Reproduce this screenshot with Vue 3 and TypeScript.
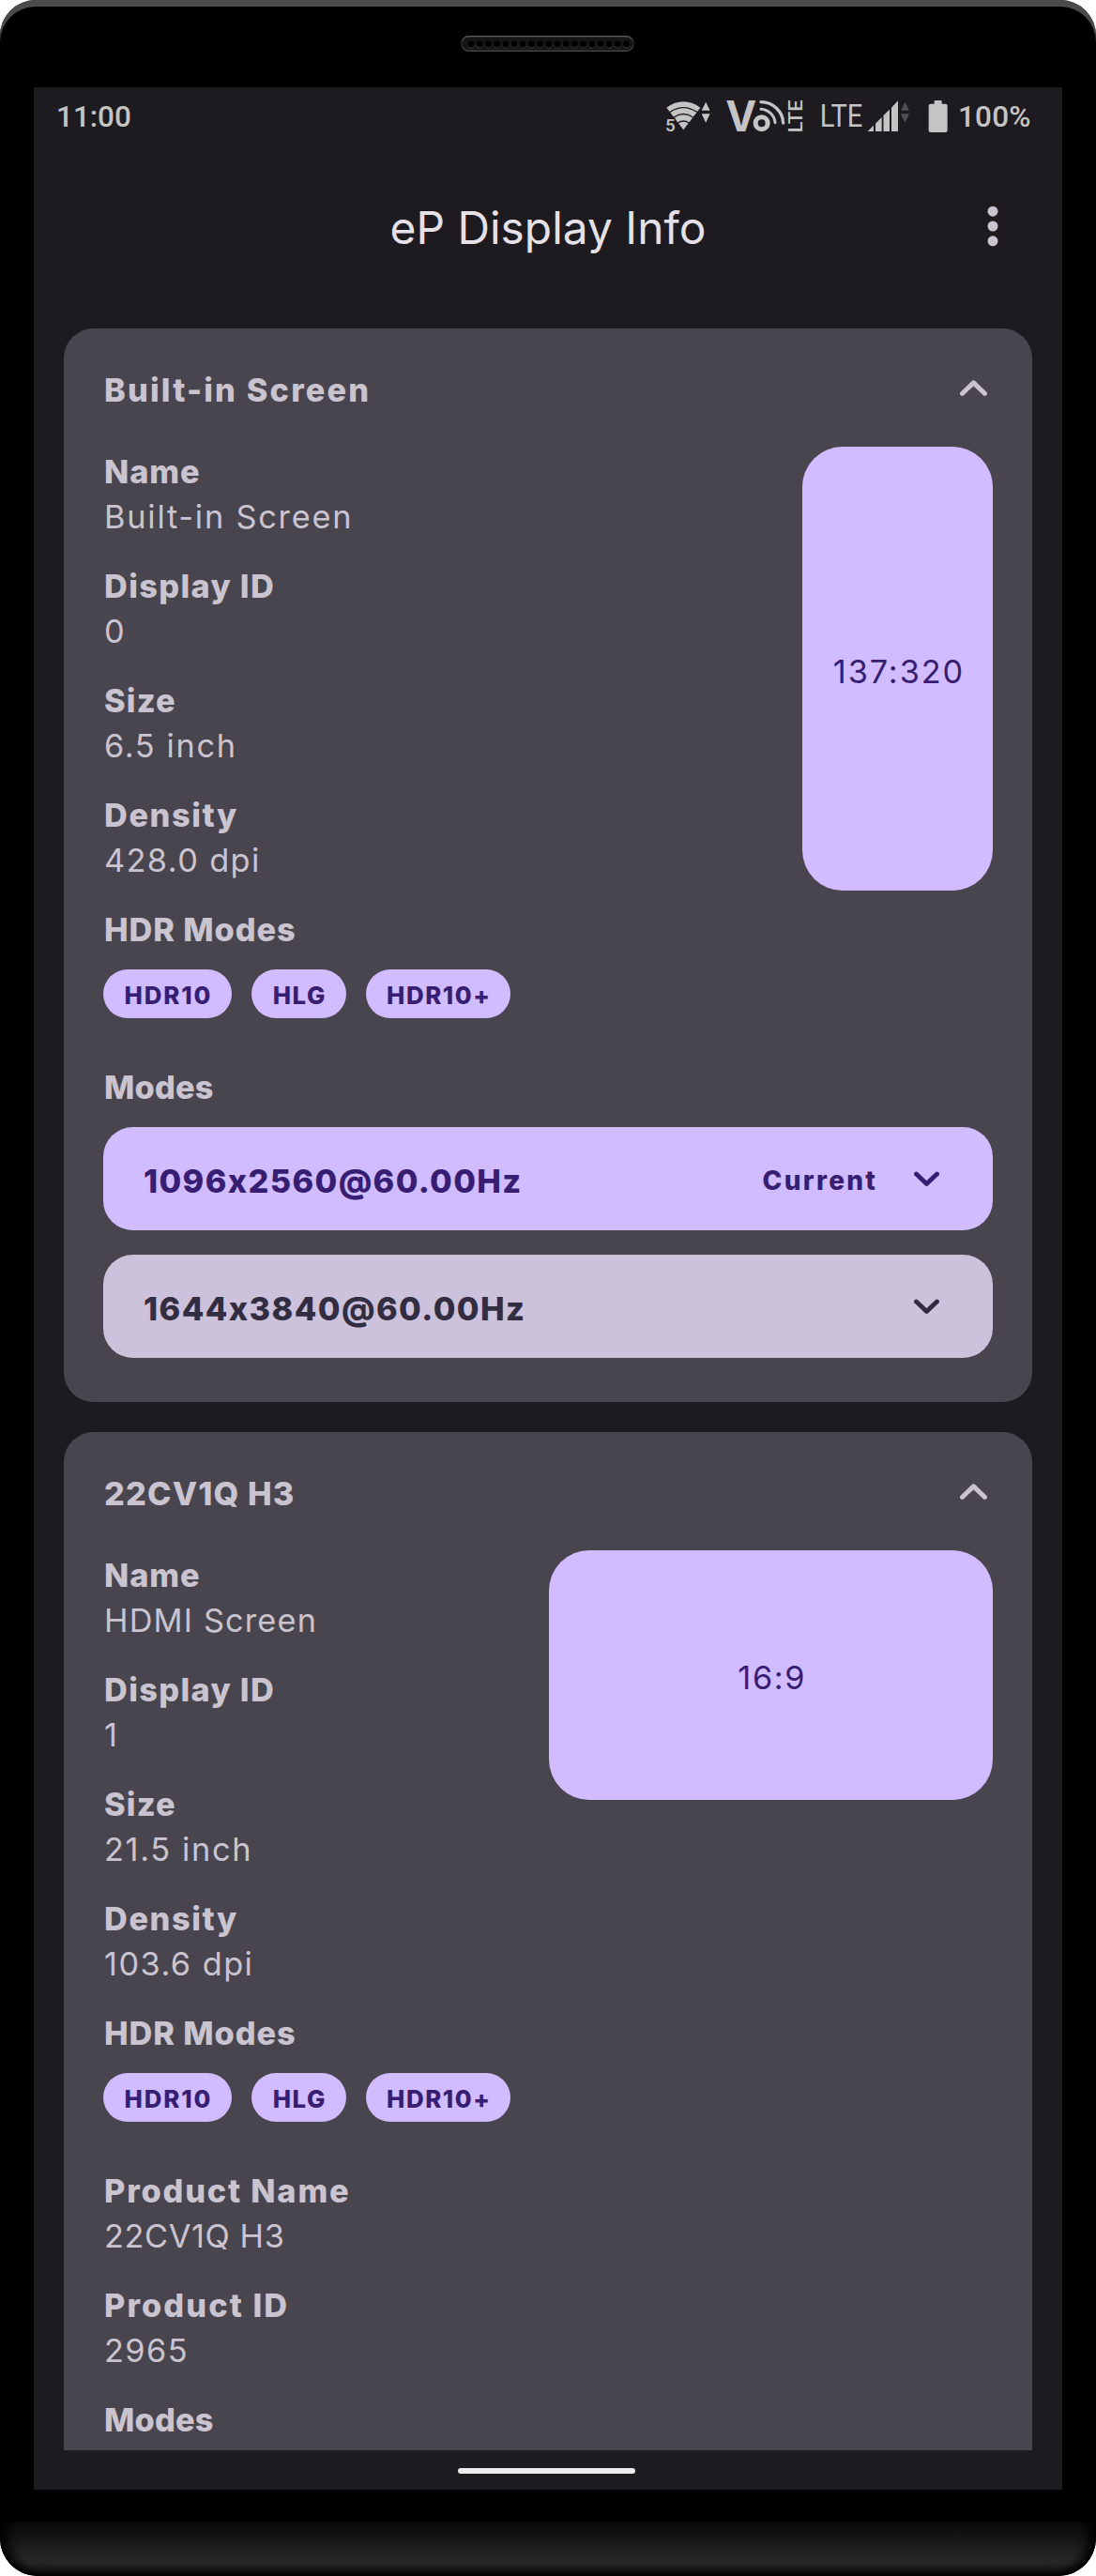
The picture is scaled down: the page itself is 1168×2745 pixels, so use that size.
<script setup lang="ts">
import type { Directive } from 'vue'

interface Line {
  text: string
  width: number
}
interface Chip extends Line {
  box: string
}
interface Field {
  label: Line
  value: Line
}
interface Mode {
  name: Line
  current: boolean
}
interface Display {
  title: Line
  fields: Field[]
  ratio: Line
  shape: { width: string; height: string }
  hdr: Chip[]
  product: Field[]
  modes: Mode[]
}

const line = (text: string, width = 0): Line => ({ text, width })
const field = (l: string, lw: number, v: string, vw = 0): Field => ({
  label: line(l, lw),
  value: line(v, vw),
})

const hdr: Chip[] = [
  { text: 'HDR10', width: 90, box: '137px' },
  { text: 'HLG', width: 54.3, box: '101px' },
  { text: 'HDR10+', width: 107.3, box: '154px' },
]

const displays: Display[] = [
  {
    title: line('Built-in Screen', 279.3),
    fields: [
      field('Name', 100, 'Built-in Screen', 258.3),
      field('Display ID', 179, '0'),
      field('Size', 74, '6.5 inch', 135.7),
      field('Density', 140, '428.0 dpi', 162),
    ],
    ratio: line('137:320', 135.7),
    shape: { width: '203px', height: '473px' },
    hdr,
    product: [],
    modes: [
      { name: line('1096x2560@60.00Hz', 402.5), current: true },
      { name: line('1644x3840@60.00Hz', 406.2), current: false },
    ],
  },
  {
    title: line('22CV1Q H3', 200.8),
    fields: [
      field('Name', 100, 'HDMI Screen', 220.7),
      field('Display ID', 179, '1'),
      field('Size', 74, '21.5 inch', 152.2),
      field('Density', 140, '103.6 dpi', 155.6),
    ],
    ratio: line('16:9', 69),
    shape: { width: '473px', height: '266px' },
    hdr,
    product: [
      field('Product Name', 259, '22CV1Q H3', 188.7),
      field('Product ID', 193.3, '2965', 84.7),
    ],
    modes: [],
  },
]

// Tracks a single line of text so that its inked width equals the given one.
const vFit: Directive<HTMLElement, number> = {
  mounted(el, { value }) {
    const text = (el.textContent ?? '').trim()
    const ctx = document.createElement('canvas').getContext('2d')
    if (!ctx || !value || text.length < 2) return
    const cs = getComputedStyle(el)
    ctx.font = `${cs.fontWeight} ${cs.fontSize} ${cs.fontFamily}`
    const m = ctx.measureText(text)
    const ink = m.actualBoundingBoxRight + m.actualBoundingBoxLeft
    const gap = (value - ink) / (text.length - 1)
    el.style.letterSpacing = `${gap.toFixed(3)}px`
    el.style.marginRight = `${(-gap).toFixed(3)}px`
  },
}

const holes: number[] = Array.from({ length: 19 }, (_, i) => 11 + i * 9.2)
</script>

<template>
  <div class="device">
    <div class="bezel-top">
      <svg class="speaker" width="185" height="17" viewBox="0 0 185 17">
        <defs>
          <linearGradient id="rim" x1="0" y1="0" x2="0" y2="1">
            <stop offset="0" stop-color="#555" />
            <stop offset="0.5" stop-color="#222" />
            <stop offset="1" stop-color="#444" />
          </linearGradient>
        </defs>
        <rect x="0.8" y="0.8" width="183.4" height="15.4" rx="7.7" fill="#151515" stroke="url(#rim)" stroke-width="1.6" />
        <g v-for="x in holes" :key="x">
          <circle :cx="x" cy="9.8" r="3.7" fill="#454545" />
          <circle :cx="x" cy="9.1" r="3.6" fill="#000" />
        </g>
      </svg>
    </div>

    <div class="screen">
      <div class="status">
        <span class="st-text clock" v-fit="77">11:00</span>
        <svg class="ic wifi" width="49.333" height="36" viewBox="88 78 148 108">
          <path d="M146 175 L92 104 Q146 66 200 104 Z" fill="#c4c4c4" />
          <g fill="none" stroke="#1d1b20" stroke-width="4">
            <path d="M103 118 Q146 90 189 118" />
            <path d="M115 135 Q146 114 177 135" />
            <path d="M128 153 Q146 141 164 153" />
          </g>
          <text x="88" y="181" class="five">5</text>
          <path d="M217.500 86 L231 113 H204 Z M204 124 H231 L217.500 152 Z" fill="#c4c4c4" />
        </svg>
        <svg class="ic volte" width="83.333" height="36" viewBox="278 78 250 108">
          <text x="279" y="180" class="vee" textLength="99" lengthAdjust="spacingAndGlyphs">V</text>
          <circle cx="394" cy="153.500" r="19.500" fill="none" stroke="#c4c4c4" stroke-width="15" />
          <path d="M392 86 A72 70 0 0 1 463 153" fill="none" stroke="#c4c4c4" stroke-width="10" stroke-linecap="round" />
          <path d="M392 109 A48 46 0 0 1 437 152" fill="none" stroke="#c4c4c4" stroke-width="9" stroke-linecap="round" />
          <text transform="translate(524.500 184) rotate(-90)" class="vlte" textLength="105" lengthAdjust="spacingAndGlyphs">LTE</text>
        </svg>
        <svg class="ic signal" width="96" height="36" viewBox="582 78 288 108">
          <text x="581" y="165" class="lte" textLength="137" lengthAdjust="spacingAndGlyphs">LTE</text>
          <path d="M734 180 L753 161 V180 Z M759 155 L779 135 V180 H759 Z M784.500 129 L804 110 V180 H784.500 Z M810 104 L831 82 V180 H810 Z" fill="#c4c4c4" />
          <path d="M853.500 86 L867 113 H840 Z M840 124 H867 L853.500 152 Z" fill="#4f4e51" />
        </svg>
        <svg class="ic battery" width="21.333" height="36" viewBox="928 78 64 108">
          <path d="M948 92 V84 Q948 81 951 81 H969 Q972 81 972 84 V92 H984 Q990 92 990 98 V177 Q990 183 984 183 H936 Q930 183 930 177 V98 Q930 92 936 92 Z" fill="#c4c4c4" />
        </svg>
        <span class="st-text pct"><span v-fit="74.3">100%</span></span>
      </div>

      <header class="appbar">
        <h1 v-fit="333.3">eP Display Info</h1>
        <svg class="more" width="12" height="44" viewBox="0 0 12 44">
          <circle cx="6" cy="6.2" r="5.5" fill="#cac4d0" />
          <circle cx="6" cy="22" r="5.5" fill="#cac4d0" />
          <circle cx="6" cy="37.800" r="5.5" fill="#cac4d0" />
        </svg>
      </header>

      <main class="list">
        <section v-for="d in displays" :key="d.title.text" class="card">
          <div class="card-head">
            <h2 v-fit="d.title.width">{{ d.title.text }}</h2>
            <svg width="29" height="17" viewBox="0 0 29 17">
              <path d="M2.600 14.300 L14.500 2.900 L26.400 14.300" fill="none" stroke="currentColor" stroke-width="5" stroke-linecap="round" stroke-linejoin="round" />
            </svg>
          </div>
          <div class="overview">
            <div class="fields">
              <div v-for="f in d.fields" :key="f.label.text" class="field">
                <div class="row"><b v-fit="f.label.width">{{ f.label.text }}</b></div>
                <div class="row"><span v-fit="f.value.width">{{ f.value.text }}</span></div>
              </div>
            </div>
            <div class="shape" :style="d.shape">
              <span v-fit="d.ratio.width">{{ d.ratio.text }}</span>
            </div>
          </div>
          <div class="row"><b v-fit="202">HDR Modes</b></div>
          <div class="chips">
            <span v-for="h in d.hdr" :key="h.text" class="chip" :style="{ width: h.box }"><span v-fit="h.width">{{ h.text }}</span></span>
          </div>
          <div v-for="f in d.product" :key="f.label.text" class="field">
            <div class="row"><b v-fit="f.label.width">{{ f.label.text }}</b></div>
            <div class="row"><span v-fit="f.value.width">{{ f.value.text }}</span></div>
          </div>
          <div class="row"><b v-fit="114.7">Modes</b></div>
          <div class="modes">
            <div v-for="m in d.modes" :key="m.name.text" class="mode" :class="{ current: m.current }">
              <b class="mode-name" v-fit="m.name.width">{{ m.name.text }}</b>
              <span class="mode-end">
                <b v-if="m.current" class="mode-tag" v-fit="119.7">Current</b>
                <svg width="27" height="17" viewBox="0 0 27 17">
                  <path d="M2.500 3 L13.500 13.600 L24.500 3" fill="none" stroke="currentColor" stroke-width="4.800" stroke-linecap="round" stroke-linejoin="round" />
                </svg>
              </span>
            </div>
          </div>
        </section>
      </main>

      <div class="nav"><i class="handle"></i></div>
    </div>
    <div class="chin"></div>
  </div>
</template>

<style>
body {
  background: #fff;
}
</style>

<style scoped>
.device {
  box-sizing: border-box;
  width: 1168px;
  height: 2745px;
  border-radius: 38px 38px 40px 40px;
  background: #000;
  box-shadow: inset 0 7px 0 #4b4b4b;
  overflow: hidden;
  display: flex;
  flex-direction: column;
  align-items: center;
  font-family: Inter, 'Noto Sans', sans-serif;
  white-space: nowrap;
}
.bezel-top {
  height: 93px;
  width: 100%;
  box-sizing: border-box;
  padding: 38px 0 0 491px;
  flex: none;
}
.speaker,
.ic,
.more {
  display: block;
  flex: none;
  overflow: visible;
}
.screen {
  width: 1096px;
  height: 2560px;
  flex: none;
  background: #1d1b20;
  color: #cac4d0;
  display: flex;
  flex-direction: column;
}
.status {
  height: 62px;
  flex: none;
  display: flex;
  align-items: center;
  box-sizing: border-box;
  padding: 0 33px 0 24px;
  font-family: Roboto, sans-serif;
  color: #c4c4c4;
}
.st-text {
  font-size: 31.5px;
  font-weight: 500;
  line-height: 40px;
  padding-top: 2px;
}
.wifi {
  margin-left: auto;
}
.five {
  font: 500 56px Roboto, sans-serif;
  fill: #c4c4c4;
  stroke: #1d1b20;
  stroke-width: 8px;
  paint-order: stroke;
}
.volte {
  margin-left: 14px;
}
.vee {
  font: 700 136px Inter, sans-serif;
  fill: #c4c4c4;
}
.vlte {
  font: 500 62px Roboto, sans-serif;
  fill: #c4c4c4;
}
.lte {
  font: 400 97px Roboto, sans-serif;
  fill: #c4c4c4;
}
.signal {
  margin-left: 18px;
}
.battery {
  margin-left: 19.3px;
}
.pct {
  margin-left: 10.3px;
  flex: 0 0 78px;
}
.appbar {
  height: 171px;
  flex: none;
  display: grid;
  grid-template-columns: 1fr auto 1fr;
  align-items: center;
}
.appbar h1 {
  grid-column: 2;
  margin: 0;
  padding-top: 4px;
  font-size: 47.8px;
  font-weight: 400;
  line-height: 60px;
  color: #e6e0e9;
}
.more {
  justify-self: end;
  margin-right: 67.6px;
}
.list {
  flex: 1;
  min-height: 0;
  overflow: hidden;
  padding: 24px 32px 0;
  display: flex;
  flex-direction: column;
  gap: 32px;
}
.card {
  flex: none;
  background: #49454f;
  border-radius: 31.5px;
  padding: 0 42px 47px;
  font-size: 34.3px;
}
.card b {
  font-weight: 800;
}
.card-head {
  height: 126px;
  display: flex;
  align-items: center;
  justify-content: space-between;
}
.card-head h2 {
  margin: 0;
  padding: 5px 0 0 1px;
  font-size: inherit;
  font-weight: 800;
  line-height: 48px;
}
.card-head svg {
  margin-right: 6px;
}
.overview {
  display: flex;
  justify-content: space-between;
  align-items: flex-start;
}
.fields {
  padding-top: 2.6px;
}
.field {
  padding-bottom: 26px;
}
.row {
  height: 48px;
  line-height: 48px;
  padding-left: 1px;
}
.shape {
  flex: none;
  display: flex;
  align-items: center;
  justify-content: center;
  box-sizing: border-box;
  padding: 5px 0 0 1px;
  border-radius: 43px;
  background: #d0bcff;
  color: #381e72;
}
.chips {
  display: flex;
  gap: 21px;
  margin: 18.4px 0 49.6px;
}
.chip {
  flex: none;
  height: 52px;
  box-sizing: border-box;
  padding-top: 3px;
  display: flex;
  justify-content: center;
  border-radius: 26px;
  background: #d0bcff;
  color: #381e72;
  font-size: 25.8px;
  font-weight: 800;
  line-height: 49px;
}
.modes {
  margin-top: 18.7px;
  display: flex;
  flex-direction: column;
  gap: 26px;
}
.mode {
  height: 110px;
  box-sizing: border-box;
  padding: 0 57px 0 43px;
  border-radius: 31.5px;
  display: flex;
  align-items: center;
  justify-content: space-between;
  background: #ccc2dc;
  color: #332d41;
}
.mode.current {
  background: #d0bcff;
  color: #381e72;
}
.mode-name {
  padding-top: 5px;
}
.mode-end {
  display: flex;
  align-items: center;
}
.mode-tag {
  font-size: 28px;
  padding: 3px 41px 0 0;
}
.nav {
  height: 42px;
  flex: none;
  display: flex;
  box-sizing: border-box;
  padding: 19px 0 0 452px;
}
.handle {
  width: 189px;
  height: 6px;
  border-radius: 3px;
  background: #ececec;
}
.chin {
  width: 100%;
  height: 58px;
  margin-top: 34px;
  flex: none;
  border-radius: 0 0 40px 40px;
  background: linear-gradient(#0b0b0b, #151515 30%, #272727 68%, #252525 78%, #1c1c1c 90%, #101010);
  box-shadow: inset 0 -8px 8px -4px #000, inset 14px 0 14px -6px #000, inset -14px 0 14px -6px #000;
}
</style>
